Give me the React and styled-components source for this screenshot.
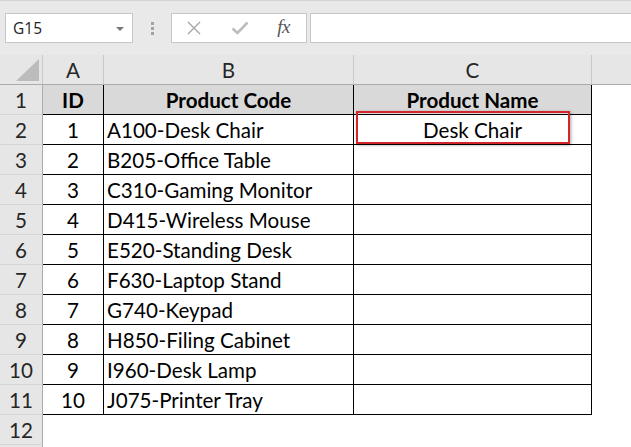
import React from "react";
import styled, { createGlobalStyle } from "styled-components";

const GlobalStyle = createGlobalStyle`
  html, body {
    margin: 0;
    padding: 0;
    background: #ffffff;
    overflow: hidden;
  }
  body {
    font-family: Lato, "Open Sans", "Liberation Sans", sans-serif;
    color: #000;
  }
`;

const Page = styled.div`
  width: 631px;
  height: 447px;
  overflow: hidden;
  background: #fff;
`;

const Toolbar = styled.div`
  box-sizing: border-box;
  height: 55px;
  background: #e9e9e9;
  border-top: 1px solid #d4d4d4;
  display: flex;
  align-items: flex-start;
  padding: 12px 0 0 5px;
`;

const NameBox = styled.div`
  box-sizing: border-box;
  width: 128px;
  height: 30px;
  background: #fff;
  border: 1px solid #c6c6c6;
  display: flex;
  align-items: center;
  justify-content: space-between;
  padding: 0 8px 0 7px;
  font-family: "Open Sans", "Noto Sans", sans-serif;
  font-size: 15.5px;
  color: #222;
`;

const Caret = styled.span`
  width: 0;
  height: 0;
  border-left: 4px solid transparent;
  border-right: 4px solid transparent;
  border-top: 4px solid #777;
  margin-top: 2px;
`;

const Grip = styled.div`
  width: 38px;
  height: 30px;
  display: flex;
  flex-direction: column;
  align-items: center;
  justify-content: center;
  gap: 2px;
  & > span {
    width: 3px;
    height: 3px;
    background: #a3a3a3;
  }
`;

const FxBox = styled.div`
  box-sizing: border-box;
  width: 136px;
  height: 30px;
  background: #fff;
  border: 1px solid #c6c6c6;
  display: flex;
  align-items: center;
  padding: 0 0 0 11px;
`;

const IconSlot = styled.div`
  width: ${(p) => p.$w}px;
  display: flex;
  align-items: center;
  justify-content: center;
`;

const FxText = styled.span`
  font-family: "Liberation Serif", "DejaVu Serif", serif;
  font-style: italic;
  font-size: 19px;
  color: #555;
  letter-spacing: -0.5px;
  margin-top: -2px;
`;

const FormulaInput = styled.div`
  box-sizing: border-box;
  flex: 1;
  height: 30px;
  margin-left: 3px;
  margin-right: -4px;
  background: #fff;
  border: 1px solid #c6c6c6;
`;

const SheetWrap = styled.div`
  position: relative;
`;

const Grid = styled.div`
  display: grid;
  grid-template-columns: 43px 61px 250px 238px 1fr;
  grid-auto-rows: 30px;
  font-size: 20.6px;
`;

const HeadCell = styled.div`
  box-sizing: border-box;
  position: relative;
  background: #e6e6e6;
  border-right: ${(p) => (p.$last ? "none" : "1px solid #c9c9c9")};
  border-bottom: 1px solid #ababab;
  display: flex;
  align-items: center;
  justify-content: center;
  color: #262626;
  padding-top: 1px;
`;

const Corner = styled.svg`
  position: absolute;
  right: 2px;
  bottom: 3px;
`;

const RowHead = styled.div`
  box-sizing: border-box;
  background: #e6e6e6;
  border-right: 1px solid #ababab;
  border-bottom: 1px solid #d6d6d6;
  display: flex;
  align-items: center;
  justify-content: center;
  color: #262626;
  padding-top: 1px;
`;

const Cell = styled.div`
  box-sizing: border-box;
  background: ${(p) => (p.$head ? "#d9d9d9" : "#fff")};
  font-weight: ${(p) => (p.$head ? 700 : 400)};
  border-right: ${(p) => (p.$edge ? "1px solid #000" : "none")};
  border-bottom: ${(p) => (p.$edge ? "1px solid #000" : "none")};
  display: flex;
  align-items: center;
  justify-content: ${(p) => (p.$align === "left" ? "flex-start" : "center")};
  padding: 1px 3px 0;
  white-space: nowrap;
  overflow: hidden;
`;

const Blank = styled.div`
  background: #fff;
`;

const Highlight = styled.div`
  position: absolute;
  left: 356px;
  top: 56px;
  width: 214px;
  height: 33px;
  box-sizing: border-box;
  border: 2px solid #d3262c;
  box-shadow: 1px 1px 3px rgba(0, 0, 0, 0.35);
  pointer-events: none;
`;

const products = [
  "A100-Desk Chair",
  "B205-Office Table",
  "C310-Gaming Monitor",
  "D415-Wireless Mouse",
  "E520-Standing Desk",
  "F630-Laptop Stand",
  "G740-Keypad",
  "H850-Filing Cabinet",
  "I960-Desk Lamp",
  "J075-Printer Tray",
];

const CloseIcon = () => (
  <svg width="16" height="16" viewBox="0 0 16 16">
    <path d="M2 2 L14 14 M14 2 L2 14" stroke="#a6a6a6" strokeWidth="1.4" fill="none" />
  </svg>
);

const CheckIcon = () => (
  <svg width="18" height="14" viewBox="0 0 18 14">
    <path d="M1.5 7.5 L6.5 12 L16.5 1.5" stroke="#bdbdbd" strokeWidth="2.6" fill="none" />
  </svg>
);

export default function App() {
  return (
    <Page>
      <GlobalStyle />
      <Toolbar>
        <NameBox>
          G15
          <Caret />
        </NameBox>
        <Grip>
          <span />
          <span />
          <span />
        </Grip>
        <FxBox>
          <IconSlot $w={21}>
            <CloseIcon />
          </IconSlot>
          <IconSlot $w={71}>
            <CheckIcon />
          </IconSlot>
          <IconSlot $w={17}>
            <FxText>fx</FxText>
          </IconSlot>
        </FxBox>
        <FormulaInput />
      </Toolbar>

      <SheetWrap>
        <Grid>
          <HeadCell>
            <Corner width="24" height="22" viewBox="0 0 24 22">
              <polygon points="23,0 23,22 0,22" fill="#bcbcbc" />
            </Corner>
          </HeadCell>
          <HeadCell>A</HeadCell>
          <HeadCell>B</HeadCell>
          <HeadCell>C</HeadCell>
          <HeadCell $last />

          <RowHead>1</RowHead>
          <Cell $head $edge>ID</Cell>
          <Cell $head $edge>Product Code</Cell>
          <Cell $head $edge>Product Name</Cell>
          <Blank />

          {products.map((code, i) => (
            <React.Fragment key={code}>
              <RowHead>{i + 2}</RowHead>
              <Cell $edge>{i + 1}</Cell>
              <Cell $edge $align="left">{code}</Cell>
              <Cell $edge>{i === 0 ? "Desk Chair" : ""}</Cell>
              <Blank />
            </React.Fragment>
          ))}

          <RowHead>12</RowHead>
          <Blank />
          <Blank />
          <Blank />
          <Blank />
          <RowHead />
        </Grid>
        <Highlight />
      </SheetWrap>
    </Page>
  );
}
